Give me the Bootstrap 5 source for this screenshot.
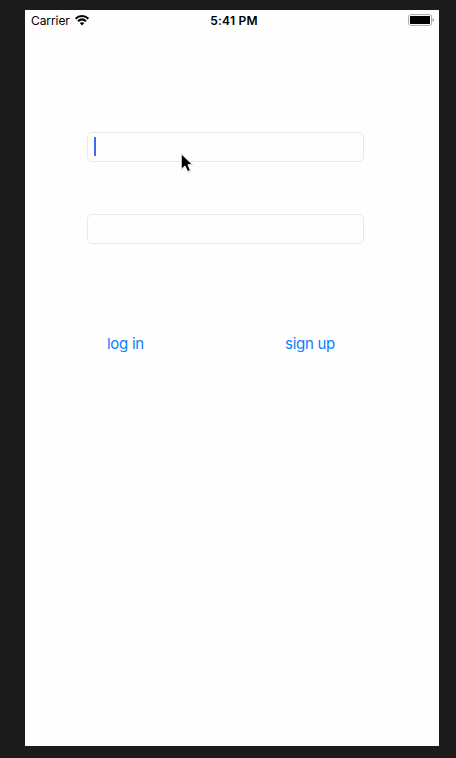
<!DOCTYPE html>
<html lang="en">
<head>
<meta charset="utf-8">
<meta name="viewport" content="width=device-width, initial-scale=1">
<title>Log in</title>
<link href="https://cdn.jsdelivr.net/npm/bootstrap@5.3.0/dist/css/bootstrap.min.css" rel="stylesheet">
<style>
  body { background: #1b1b1b; font-family: Inter, "Liberation Sans", sans-serif; padding: 10px 17px 12px 25px; overflow: hidden; }
  .phone { height: 736px; background: #fefefe; color: #000; }
  .status { height: 20px; font-size: 12px; line-height: 20px; padding: 0 5px 0 6px; }
  .status > div { flex: 1 1 0; }
  .carrier { letter-spacing: -.08px; padding-top: 1px; }
  .clock { font-weight: 600; letter-spacing: .25px; margin-left: 3px; padding-top: 1px; }
  .login-form { padding: 102px 75px 0 62px; }
  .text-box { height: 30px; border: 1px solid #e9e9e9; border-radius: 5px; background: #fefefe; padding: 4px 6px; }
  .text-box + .text-box { margin-top: 52px; }
  .caret { width: 2px; height: 19px; background: #426bf2; }
  .actions { margin-top: 85px; padding: 0 29px 0 20px; }
  .link-btn { --bs-btn-color: #0a80fb; --bs-btn-padding-x: 0; --bs-btn-padding-y: 0; --bs-btn-border-width: 0; --bs-btn-font-size: 15px; --bs-btn-line-height: 30px; letter-spacing: -.28px; }
  .pointer { left: 180px; top: 152px; }
</style>
<script src="https://cdn.jsdelivr.net/npm/bootstrap@5.3.0/dist/js/bootstrap.bundle.min.js"></script>
</head>
<body>
<main class="phone">
  <header class="status d-flex align-items-center">
    <div class="d-flex align-items-center">
      <span class="carrier">Carrier</span>
      <svg class="ms-1" width="16" height="12" viewBox="0 0 16 12" fill="none" stroke="#000" stroke-width="2">
        <path d="M1.6 4.8C5.3 1.2 10.7 1.2 14.4 4.8M4 7.2c2.4-2.2 5.6-2.2 8 0"/>
        <path d="M8 11.4 5.7 9.1c1.3-1.2 3.3-1.2 4.6 0z" fill="#000" stroke="none"/>
      </svg>
    </div>
    <div class="clock text-center">5:41 PM</div>
    <div class="d-flex justify-content-end">
      <svg width="26" height="12" viewBox="0 0 26 12">
        <rect x=".6" y=".6" width="23" height="10.8" rx="2.2" fill="#fff" stroke="#a5a8a5" stroke-width="1"/>
        <rect x="2" y="2" width="20" height="8" rx=".5"/>
        <path d="M24.7 4c1.6.5 1.6 3.5 0 4z" fill="#999"/>
      </svg>
    </div>
  </header>
  <form class="login-form">
    <div class="text-box" role="textbox" aria-label="User name"><div class="caret"></div></div>
    <div class="text-box" role="textbox" aria-label="Password"></div>
    <div class="actions d-flex justify-content-between">
      <button type="button" class="btn link-btn">log in</button>
      <button type="button" class="btn link-btn">sign up</button>
    </div>
  </form>
</main>
<svg class="pointer position-absolute" width="15" height="22" viewBox="0 0 15 22">
  <path d="M1.2 2v16.3l4-3.6 2.7 6 3.3-1.4-2.6-5.7h5z" fill="#000" opacity=".2"/>
  <path d="M1.2 1.7v15.6l3.8-3.4 2.6 5.7 2.9-1.3-2.6-5.6h4.6z" stroke="#fff" stroke-width="1"/>
</svg>
</body>
</html>
